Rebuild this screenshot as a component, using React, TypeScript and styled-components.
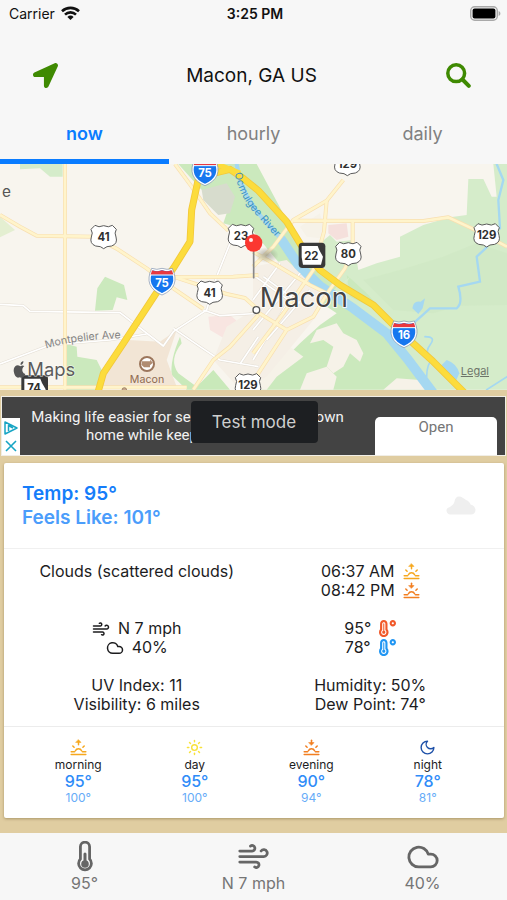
import React from "react";
import styled, { createGlobalStyle, css } from "styled-components";
import { FaLocationArrow, FaTemperatureHigh } from "react-icons/fa";
import { LuWind, LuCloud, LuMoon, LuSun } from "react-icons/lu";

const GlobalStyle = createGlobalStyle`
  *, *::before, *::after { box-sizing: border-box; }
  body {
    margin: 0;
    background: #e0cda1;
    color: #1c1c1e;
    font-family: Inter, "Liberation Sans", sans-serif;
  }
  button { font: inherit; color: inherit; border: 0; padding: 0; background: none; cursor: pointer; }
`;

const Screen = styled.div`
  display: flex;
  flex-direction: column;
  min-height: 100vh;
`;

const Header = styled.header`
  background: #f7f7f7;
`;

const StatusBar = styled.div`
  display: grid;
  grid-template-columns: 1fr auto 1fr;
  align-items: center;
  height: 27px;
  padding: 0 6px 0 9px;
  font-size: 14px;
  color: #111;
`;

const Carrier = styled.div`
  display: flex;
  align-items: center;
  gap: 6px;
`;

const Clock = styled.time`
  font-weight: 600;
`;

const BatterySlot = styled.div`
  display: flex;
  justify-content: flex-end;
`;

const TitleRow = styled.div`
  display: flex;
  align-items: center;
  justify-content: space-between;
  padding: 24px 24px 0 20px;
`;

const IconButton = styled.button`
  display: grid;
  place-items: center;
  width: 50px;
  height: 48px;
  color: #3f8a02;
`;

const Place = styled.h1`
  margin: 0;
  font-size: 19px;
  font-weight: 400;
  color: #111;
`;

const Tabs = styled.nav`
  display: grid;
  grid-template-columns: repeat(3, 1fr);
`;

const Tab = styled.button<{ $active?: boolean }>`
  height: 65px;
  padding-top: 9px;
  border-bottom: 5px solid transparent;
  font-size: 18px;
  color: #808080;
  ${(p) =>
    p.$active &&
    css`
      color: #0a7cff;
      font-weight: 600;
      border-bottom-color: #0a7cff;
    `}
`;

const MapPanel = styled.section`
  position: relative;
  height: 226px;
  overflow: hidden;
`;

const MapArt = styled.svg`
  display: block;
  width: 100%;
  height: 100%;
`;

const Legal = styled.a`
  position: absolute;
  right: 18px;
  bottom: 12px;
  font-size: 11px;
  color: #6d7469;
  text-decoration: underline;
`;

const Main = styled.main`
  flex: 1;
`;

const Ad = styled.aside`
  position: relative;
  display: flex;
  justify-content: space-between;
  height: 60px;
  margin: 6px 1px 7px;
  border: 1px solid #f1eee6;
  background: #434343;
  color: #f2f2f2;
  font-family: Roboto, "Liberation Sans", sans-serif;
`;

const AdMarks = styled.div`
  align-self: flex-end;
  display: flex;
  flex-direction: column;
  align-items: center;
  justify-content: space-around;
  width: 18px;
  height: 37px;
  background: #fff;
`;

const MarkButton = styled.button`
  display: flex;
`;

const AdText = styled.p`
  flex: 1;
  margin: 0;
  padding: 11px 20px 0 0;
  font-size: 15px;
  line-height: 18px;
  text-align: center;
`;

const AdLine = styled.span`
  display: block;
  white-space: nowrap;
`;

const OpenButton = styled.button`
  align-self: flex-end;
  width: 122px;
  height: 38px;
  margin-right: 8px;
  padding-bottom: 18px;
  border-radius: 5px 5px 0 0;
  background: #fff;
  color: #757575;
  font-size: 15px;
`;

const Toast = styled.div`
  position: absolute;
  top: 4px;
  left: calc(50% - 63px);
  display: grid;
  place-items: center;
  width: 127px;
  height: 42px;
  border-radius: 4px;
  background: #1d1f22;
  color: #cfcfcf;
  font-family: Inter, sans-serif;
  font-size: 17px;
`;

const Card = styled.section`
  margin: 0 3px 15px 4px;
  background: #fff;
  border-radius: 2px;
  box-shadow: 0 1px 3px rgba(90, 70, 20, 0.4);
`;

const Summary = styled.div`
  display: flex;
  align-items: center;
  justify-content: space-between;
  height: 86px;
  padding: 0 28px 0 18px;
  border-bottom: 1px solid #f0f0f0;
`;

const Reading = styled.p<{ $soft?: boolean }>`
  margin: 0;
  font-size: 19px;
  line-height: 24px;
  font-weight: 600;
  color: ${(p) => (p.$soft ? "#4b9dfb" : "#157dfa")};
`;

const Details = styled.div`
  display: grid;
  grid-template-columns: 1fr 1fr;
  row-gap: 19px;
  padding: 13px 17px 12px 16px;
  border-bottom: 1px solid #ececec;
  font-size: 16px;
  line-height: 19px;
`;

const Line = styled.div<{ $gap?: number }>`
  display: flex;
  align-items: center;
  justify-content: center;
  gap: ${(p) => p.$gap ?? 0}px;
  height: 19px;
  white-space: nowrap;
`;

const Periods = styled.div`
  display: grid;
  grid-template-columns: repeat(4, 1fr);
  padding: 12px 18px 12px 16px;
`;

const Period = styled.div`
  display: flex;
  flex-direction: column;
  align-items: center;
`;

const PeriodName = styled.span`
  font-size: 12px;
  line-height: 17px;
`;

const PeriodTemp = styled.span`
  font-size: 16px;
  line-height: 17px;
  font-weight: 500;
  color: #2f8cf8;
`;

const PeriodFeels = styled.span`
  font-size: 12px;
  line-height: 16px;
  color: #67acf8;
`;

const Footer = styled.footer`
  display: grid;
  grid-template-columns: repeat(3, 1fr);
  height: 67px;
  padding-top: 7px;
  background: #f7f7f7;
  color: #757575;
`;

const FooterItem = styled.button`
  display: flex;
  flex-direction: column;
  align-items: center;
  font-size: 16px;
  line-height: 20px;
`;

const FooterIcon = styled.span`
  display: grid;
  place-items: center;
  height: 33px;
  color: #666;
`;

const Wifi = () => (
  <svg width="19" height="15" viewBox="0 0 19 15" fill="none" stroke="#111" strokeWidth="2.6">
    <path d="M1 5.2A12.4 12.4 0 0 1 18 5.2" />
    <path d="M4 8.6A8 8 0 0 1 15 8.6" />
    <path d="M9.5 14L6.4 10.9A4.4 4.4 0 0 1 12.6 10.9Z" fill="#111" stroke="none" />
  </svg>
);

const Battery = () => (
  <svg width="31" height="15" viewBox="0 0 31 15">
    <rect x="0.7" y="0.7" width="26.6" height="13.6" rx="4" fill="#f2f2f2" stroke="#a9a9a9" strokeWidth="1.4" />
    <rect x="2.6" y="2.6" width="22.8" height="9.8" rx="2" fill="#000" />
    <path d="M28.6 5v5c2.4-.8 2.4-4.2 0-5Z" fill="#a9a9a9" />
  </svg>
);

const Search = () => (
  <svg width="25" height="25" viewBox="0 0 25 25" fill="none" stroke="currentColor" strokeLinecap="round">
    <circle cx="10.2" cy="10.2" r="8.4" strokeWidth="3.5" />
    <path d="M16.5 16.5L22.8 22.8" strokeWidth="4" />
  </svg>
);

const SunHorizon = ({ color, down }: { color: string; down?: boolean }) => (
  <svg width="17" height="17" viewBox="0 0 17 17" fill="none" stroke={color} strokeWidth="1.5" strokeLinecap="round">
    <path d={down ? "M8.5 1.2v3" : "M8.5 5.8V3"} />
    <path d={down ? "M6 3.600h5l-2.500 2.600Z" : "M6 3.400h5L8.500.8Z"} fill={color} strokeWidth="0.6" />
    <path d="M5.4 11.800a3.400 3.400 0 0 1 6.200 0M2.800 7l1.300 1.300M14.200 7l-1.300 1.300" />
    <path d="M1.200 12.800h3.400M12.400 12.800h3.400" />
    <path d="M1.200 15.600h14.600" />
  </svg>
);

const Thermometer = () => (
  <svg width="16" height="31" viewBox="0 0 16 31">
    <path
      d="M3.4 5.800a4.600 4.600 0 0 1 9.200 0v12.200a6.400 6.400 0 1 1-9.200 0Z"
      fill="#f7f7f7"
      stroke="currentColor"
      strokeWidth="2.8"
    />
    <path d="M8 13v10" stroke="currentColor" strokeWidth="3" strokeLinecap="round" />
    <circle cx="8" cy="23" r="3.800" fill="currentColor" />
  </svg>
);

const PaleCloud = () => (
  <svg width="30" height="19" viewBox="0 0 30 19">
    <path
      d="M4.500 18.500C2 18.500.5 16.500.5 14.500.5 12.500 2 11.500 4 11 6 9.500 8 8 8.500 5.500 8.800 2.500 10.500.5 13 .5c3 0 4.500 2 7 3.500 2.500 1 4 2.500 4.500 4.500 3 .8 5 3 5 5.500 0 2.700-1.800 4.500-4.500 4.500Z"
      fill="#efefef"
    />
  </svg>
);

type Mark = { x: number; y: number; label: string };

const UsShield = ({ x, y, label }: Mark) => (
  <g transform={`translate(${x} ${y})`}>
    <path
      d="M-26-35Q-15-27 0-34Q15-27 26-35L38-23Q31-12 37 0Q43 20 24 27Q8 27 0 35Q-8 27-24 27Q-43 20-37 0Q-31-12-38-23Z"
      fill="#fff"
      stroke="#5b5b5b"
      strokeWidth="3"
      strokeLinejoin="round"
    />
    <text y="12" textAnchor="middle" fontSize="34" fontWeight="700" fill="#2f2f2f">
      {label}
    </text>
  </g>
);

const Interstate = ({ x, y, label }: Mark) => (
  <g transform={`translate(${x} ${y})`}>
    <path
      d="M-29-36Q-15-30 0-36Q15-30 29-36Q53 16 0 38Q-53 16-29-36Z"
      fill="#1677ef"
      stroke="#fff"
      strokeWidth="5"
    />
    <path d="M-30-33Q-15-27 0-33Q15-27 30-33L34-20H-34Z" fill="#e9383f" />
    <path d="M-34-19H34" stroke="#fff" strokeWidth="3" />
    <path d="M-31-39Q-15-33 0-39Q15-33 31-39Q57 17 0 41Q-57 17-31-39Z" fill="none" stroke="#7b8fae" strokeWidth="2" />
    <text y="16" textAnchor="middle" fontSize="34" fontWeight="700" fill="#fff">
      {label}
    </text>
  </g>
);

const StateRoute = ({ x, y, label }: Mark) => (
  <g transform={`translate(${x} ${y})`}>
    <rect x="-40" y="-38" width="80" height="76" rx="11" fill="#393939" />
    <path d="M-31-28H17L22-15L33 4L27 28H-27L-31 6Z" fill="#fff" />
    <text y="13" x="-2" textAnchor="middle" fontSize="34" fontWeight="700" fill="#2f2f2f">
      {label}
    </text>
  </g>
);

const minorRoads = [
  "M0 165L60 200L110 227L280 230L350 266L440 325L520 385L610 447",
  "M195 12V689",
  "M525 12L575 80L630 160L685 212",
  "M520 352L700 350L775 345",
  "M520 350L680 402L735 414L775 450",
  "M775 465L690 560L640 600L580 689",
  "M0 682L560 682",
  "M1030 60L980 122L880 180L820 260L759 320",
  "M880 182L1270 183L1345 172L1430 212L1521 260",
  "M980 122L972 215L940 330L850 460L759 580",
  "M1058 185V270L1035 325L985 395L940 470L860 510L775 640L750 689",
  "M759 275L820 310L930 375L985 402",
  "M770 455L860 510",
];

const streets = [
  "M0 433L70 437L90 454L360 458L490 558L520 515L620 450L650 350L690 250",
  "M0 612L150 555L330 540L440 522",
  "M520 505L600 560L660 600L775 620",
  "M610 450L660 467L775 460",
  "M720 612L775 530",
  "M759 600L880 400",
  "M790 350L900 430",
  "M759 420L840 310",
  "M759 510L900 340",
  "M759 345L880 430",
  "M800 540L930 390",
];

const MacMap = () => (
  <MapArt viewBox="0 12 1521 678" preserveAspectRatio="xMidYMid slice" role="img" aria-label="Map of Macon">
    <rect width="1521" height="700" fill="#f8f5ee" />
    <g fill="#cbe9bd">
      <path d="M60 0H188V50L150 50L120 25L60 28Z" fill="#d5ecca" />
      <path d="M0 170L45 210L0 232Z" fill="#e4efd1" />
      <path d="M315 350L372 375L382 420L350 412L338 450L285 452L292 385Z" />
      <path d="M200 552L230 560L232 590L290 600L310 640L290 689H196Z" />
      <path d="M540 530Q510 600 515 645L560 689H690L640 630L590 680L535 640Q505 600 545 550Z" fill="#c9e9ba" />
      <path d="M535 12H770L860 180L960 340L1080 430L1180 540L1290 689H780L830 620L900 550L960 495L1010 460L920 400L830 300L760 215L670 190L680 160L600 85Z" />
      <path d="M1521 12V689H1300L1160 520L1040 420L975 340L960 250L990 225L1010 245L1060 240L1075 330L1130 310L1200 290V230L1270 195L1350 172L1400 165L1405 57H1450L1475 110H1490L1480 12Z" fill="#d5ecca" />
      <path d="M1090 360L1200 330L1330 290L1430 250L1521 280V435L1380 437L1300 460L1180 450Z" fill="#cfe8c3" opacity="0.6" />
      <path d="M1040 345L1100 400L1210 520L1150 460L1050 410Z" />
    </g>
    <path d="M605 90L680 70L705 110L690 160L655 165L610 120Z" fill="#d7dccd" />
    <path d="M385 540L480 545L530 510L500 600L530 680H300L330 620Z" fill="#f2e5d5" />
    <path d="M625 470L690 465L730 500L690 545L630 510Z" fill="#f8e5e1" />
    <path d="M985 195L1040 190L1045 230L1010 240L985 220Z" fill="#f5e0dc" />
    <path d="M1000 390L1050 350L1010 420Z" fill="#d9eecb" />
    <g fill="#f6f2e8">
      <path d="M900 200L960 160L970 200L960 235L920 230Z" />
      <path d="M930 550L950 510L1010 490L1030 520L1070 540L1090 580L1080 605L1050 580L1030 620L1000 640L980 620L1000 560L970 540Z" />
      <path d="M760 689L830 600L870 560L910 590L830 650L800 689Z" />
      <path d="M920 640L980 620L1010 650L1000 689H900Z" />
      <path d="M1150 689L1190 655L1260 660L1290 689Z" />
    </g>
    <path d="M759 320L860 300L980 410L940 480L800 650L720 689L640 600L680 500L759 450Z" fill="#f5efe6" />
    <g fill="none" stroke="#a5d8f1" strokeLinecap="round">
      <path d="M710 12Q720 90 775 160L850 245L900 320L960 375L1060 440L1160 515L1230 600L1290 700" strokeWidth="12" />
      <path d="M845 240L895 315L960 378L1060 445L1160 520L1225 600L1300 700" strokeWidth="29" />
      <path d="M1240 490L1290 445L1370 445Q1390 430 1375 380L1440 365L1430 290L1460 262M1500 205L1495 120L1510 60L1490 12" strokeWidth="7" />
      <path d="M1275 530Q1310 530 1290 555T1300 595Q1280 610 1280 650M1460 689L1521 650" strokeWidth="5" />
    </g>
    <path d="M1237 445Q1240 420 1262 425L1275 415L1268 445L1255 462Z" fill="#a5d8f1" />
    <path d="M1320 620L1340 600Q1370 610 1378 640L1365 670Z" fill="#a5d8f1" />
    <g fill="none" strokeLinejoin="round">
      {streets.map((d) => (
        <path key={d} d={d} stroke="#e3ddd3" strokeWidth="8" />
      ))}
      {streets.map((d) => (
        <path key={d} d={d} stroke="#fff" strokeWidth="5" />
      ))}
      {minorRoads.map((d) => (
        <path key={d} d={d} stroke="#f8dfb0" strokeWidth="12" />
      ))}
      {minorRoads.map((d) => (
        <path key={d} d={d} stroke="#fff4cb" strokeWidth="8" />
      ))}
      <g stroke="#f3c83a" strokeWidth="21">
        <path d="M605 12L590 80L575 150L570 245L520 325L465 405L370 550L310 640L293 700" />
        <path d="M640 40L690 28L730 55L775 92L860 185L915 275L960 330L1020 375L1120 435L1190 505L1300 605L1395 700" />
      </g>
      <g stroke="#fcdc3c" strokeWidth="16">
        <path d="M605 12L590 80L575 150L570 245L520 325L465 405L370 550L310 640L293 700" />
        <path d="M640 40L690 28L730 55L775 92L860 185L915 275L960 330L1020 375L1120 435L1190 505L1300 605L1395 700" />
        <path d="M650 12L720 40" />
      </g>
    </g>
    <UsShield x={311} y={231} label="41" />
    <UsShield x={629} y={398} label="41" />
    <UsShield x={723} y={228} label="23" />
    <UsShield x={1045} y={282} label="80" />
    <UsShield x={1460} y={226} label="129" />
    <UsShield x={1042} y={12} label="129" />
    <UsShield x={744} y={676} label="129" />
    <Interstate x={615} y={36} label="75" />
    <Interstate x={486} y={364} label="75" />
    <Interstate x={1212} y={522} label="16" />
    <StateRoute x={936} y={286} label="22" />
    <StateRoute x={104} y={684} label="74" />
    <defs>
      <path id="river-line" d="M704 40Q716 100 755 150L860 268" />
      <path id="avenue-line" d="M138 566Q250 532 400 536" />
      <radialGradient id="pin-shade">
        <stop offset="0" stopColor="#8d8d80" stopOpacity="0.7" />
        <stop offset="1" stopColor="#8d8d80" stopOpacity="0" />
      </radialGradient>
    </defs>
    <text fontSize="31" fill="#3d93c4">
      <textPath href="#river-line">Ocmulgee River</textPath>
    </text>
    <text fontSize="32" fill="#858585">
      <textPath href="#avenue-line">Montpelier Ave</textPath>
    </text>
    <text x="6" y="111" fontSize="46" fill="#555">e</text>
    <circle cx="441" cy="612" r="21" fill="#fff" stroke="#9c765c" strokeWidth="6" />
    <path d="M426 604H450V599L459 608L450 616V622H432L424 614Z" fill="#b08c72" />
    <text x="441" y="670" textAnchor="middle" fontSize="32" fill="#8f6a50">Macon</text>
    <circle cx="373" cy="690" r="7" fill="#c6a88d" stroke="#8b6a52" strokeWidth="2" />
    <text x="779" y="440" fontSize="82" fill="#454545" stroke="#fff" strokeWidth="5" paintOrder="stroke">Macon</text>
    <circle cx="769" cy="450" r="10" fill="#fff" stroke="#555" strokeWidth="4" />
    <ellipse cx="800" cy="285" rx="36" ry="24" fill="url(#pin-shade)" />
    <path d="M761 260V353" stroke="#888" strokeWidth="5" strokeLinecap="round" />
    <circle cx="761" cy="249" r="26" fill="#fb3730" />
    <circle cx="753" cy="240" r="6" fill="#fff" opacity="0.9" />
    <path
      d="M62 615Q60 606 70 603Q71 612 62 615ZM51 616Q58 616 61 619Q67 615 73 618Q64 626 68 635Q70 640 76 642Q70 656 63 653Q59 650 54 653Q44 652 41 633Q41 619 51 616Z"
      fill="#555"
    />
    <text x="82" y="648" fontSize="55" fill="#5c5c5c" stroke="#fff" strokeWidth="4" strokeOpacity="0.6" paintOrder="stroke">Maps</text>
  </MapArt>
);

const SUNRISE = "#f6a81f";
const SUNSET = "#f27f21";

const periods = [
  { name: "morning", temp: "95°", feels: "100°", icon: <SunHorizon color={SUNRISE} /> },
  { name: "day", temp: "95°", feels: "100°", icon: <LuSun size={17} color="#f8e23a" /> },
  { name: "evening", temp: "90°", feels: "94°", icon: <SunHorizon color={SUNSET} down /> },
  { name: "night", temp: "78°", feels: "81°", icon: <LuMoon size={17} color="#1d50a8" /> },
];

export default function App() {
  return (
    <Screen>
      <GlobalStyle />
      <Header>
        <StatusBar>
          <Carrier>
            Carrier <Wifi />
          </Carrier>
          <Clock>3:25 PM</Clock>
          <BatterySlot>
            <Battery />
          </BatterySlot>
        </StatusBar>
        <TitleRow>
          <IconButton aria-label="Use my location">
            <FaLocationArrow size={25} />
          </IconButton>
          <Place>Macon, GA US</Place>
          <IconButton aria-label="Search">
            <Search />
          </IconButton>
        </TitleRow>
        <Tabs>
          <Tab $active>now</Tab>
          <Tab>hourly</Tab>
          <Tab>daily</Tab>
        </Tabs>
      </Header>
      <Main>
        <MapPanel>
          <MacMap />
          <Legal href="#legal">Legal</Legal>
        </MapPanel>
        <Ad>
          <AdMarks>
            <MarkButton aria-label="Ad choices">
              <svg width="14" height="14" viewBox="0 0 14 14" fill="none" stroke="#18a5c4" strokeWidth="1.5" strokeLinejoin="round">
                <path d="M1 1L13 7L1 13ZM4.500 10V4.500L9 7" />
              </svg>
            </MarkButton>
            <MarkButton aria-label="Close ad">
              <svg width="12" height="12" viewBox="0 0 12 12" stroke="#18a5c4" strokeWidth="1.6">
                <path d="M1 1L11 11M11 1L1 11" />
              </svg>
            </MarkButton>
          </AdMarks>
          <AdText>
            <AdLine>Making life easier for seniors living in their own</AdLine>
            <AdLine>home while keeping them safe</AdLine>
          </AdText>
          <OpenButton>Open</OpenButton>
          <Toast role="status">Test mode</Toast>
        </Ad>
        <Card>
          <Summary>
            <div>
              <Reading>Temp: 95°</Reading>
              <Reading $soft>Feels Like: 101°</Reading>
            </div>
            <PaleCloud />
          </Summary>
          <Details>
            <Line>Clouds (scattered clouds)</Line>
            <div>
              <Line $gap={8}>
                06:37 AM <SunHorizon color={SUNRISE} />
              </Line>
              <Line $gap={8}>
                08:42 PM <SunHorizon color={SUNSET} down />
              </Line>
            </div>
            <div>
              <Line $gap={8}>
                <LuWind size={18} /> N 7 mph
              </Line>
              <Line $gap={8}>
                <LuCloud size={18} /> 40%
              </Line>
            </div>
            <div>
              <Line $gap={8}>
                95° <FaTemperatureHigh size={17} color="#f1592a" />
              </Line>
              <Line $gap={8}>
                78° <FaTemperatureHigh size={17} color="#2196f3" />
              </Line>
            </div>
            <div>
              <Line>UV Index: 11</Line>
              <Line>Visibility: 6 miles</Line>
            </div>
            <div>
              <Line>Humidity: 50%</Line>
              <Line>Dew Point: 74°</Line>
            </div>
          </Details>
          <Periods>
            {periods.map((p) => (
              <Period key={p.name}>
                {p.icon}
                <PeriodName>{p.name}</PeriodName>
                <PeriodTemp>{p.temp}</PeriodTemp>
                <PeriodFeels>{p.feels}</PeriodFeels>
              </Period>
            ))}
          </Periods>
        </Card>
      </Main>
      <Footer>
        <FooterItem>
          <FooterIcon>
            <Thermometer />
          </FooterIcon>
          95°
        </FooterItem>
        <FooterItem>
          <FooterIcon>
            <LuWind size={33} />
          </FooterIcon>
          N 7 mph
        </FooterItem>
        <FooterItem>
          <FooterIcon>
            <LuCloud size={34} />
          </FooterIcon>
          40%
        </FooterItem>
      </Footer>
    </Screen>
  );
}
